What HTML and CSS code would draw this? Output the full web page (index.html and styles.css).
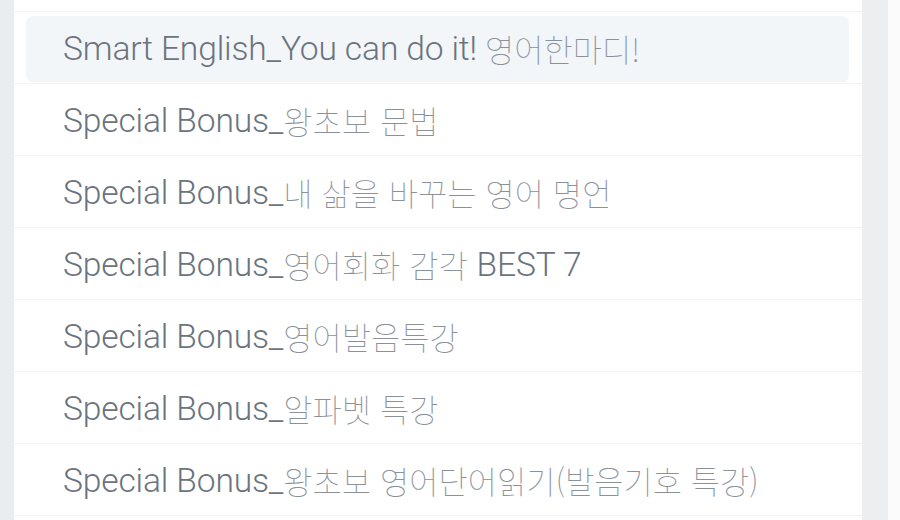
FILE: index.html
```html
<!DOCTYPE html>
<html lang="ko">
<head>
<meta charset="utf-8">
<link rel="stylesheet" href="styles.css">
</head>
<body>
<div class="page">
  <div class="gutter-left"></div>
  <div class="panel">
    <ul class="list">
      <li class="item active"><div class="label">Smart English_You can do it! <span class="ko">영어한마디!</span></div></li>
      <li class="item"><div class="label">Special Bonus_<span class="ko">왕초보 문법</span></div></li>
      <li class="item"><div class="label">Special Bonus_<span class="ko">내 삶을 바꾸는 영어 명언</span></div></li>
      <li class="item"><div class="label">Special Bonus_<span class="ko">영어회화 감각 </span>BEST 7</div></li>
      <li class="item"><div class="label">Special Bonus_<span class="ko">영어발음특강</span></div></li>
      <li class="item"><div class="label">Special Bonus_<span class="ko">알파벳 특강</span></div></li>
      <li class="item"><div class="label">Special Bonus_<span class="ko">왕초보 영어단어읽기(발음기호 특강)</span></div></li>
    </ul>
  </div>
  <div class="scroll"></div>
  <div class="gutter-right"></div>
</div>
</body>
</html>
```

FILE: styles.css
```css
html, body {
  margin: 0;
  padding: 0;
  width: 900px;
  height: 520px;
  overflow: hidden;
  background: #ffffff;
}
.page {
  display: flex;
  width: 900px;
  height: 520px;
}
.gutter-left {
  width: 14px;
  flex: none;
  background: #eaedef;
}
.panel {
  width: 848px;
  flex: none;
  background: #ffffff;
  overflow: hidden;
}
.scroll {
  width: 26px;
  flex: none;
  background: #eceef0;
}
.gutter-right {
  flex: 1;
  background: #fbfbfc;
}
.list {
  list-style: none;
  margin: 0;
  padding: 11px 0 0 0;
}
.item {
  height: 67px;
  border-top: 1px solid #f3f4f6;
  padding: 4px 13px 0 12px;
}
.item:last-child {
  border-bottom: 1px solid #f3f4f6;
}
.item .label {
  height: 66px;
  border-radius: 7px;
  padding-left: 37px;
  display: flex;
  align-items: center;
  font-family: Roboto, "Noto Sans CJK KR", sans-serif;
  font-weight: 300;
  font-size: 33.6px;
  color: #6b747e;
  white-space: pre;
  letter-spacing: -0.15px;
  line-height: 1;
  box-sizing: border-box;
}
.item .label .ko {
  font-family: "Noto Sans CJK KR", sans-serif;
  font-weight: 100;
  font-size: 31.8px;
  letter-spacing: 0;
  color: #8a9199;
  white-space: pre;
}
.item.active .label {
  background: #f3f6f9;
}
```
